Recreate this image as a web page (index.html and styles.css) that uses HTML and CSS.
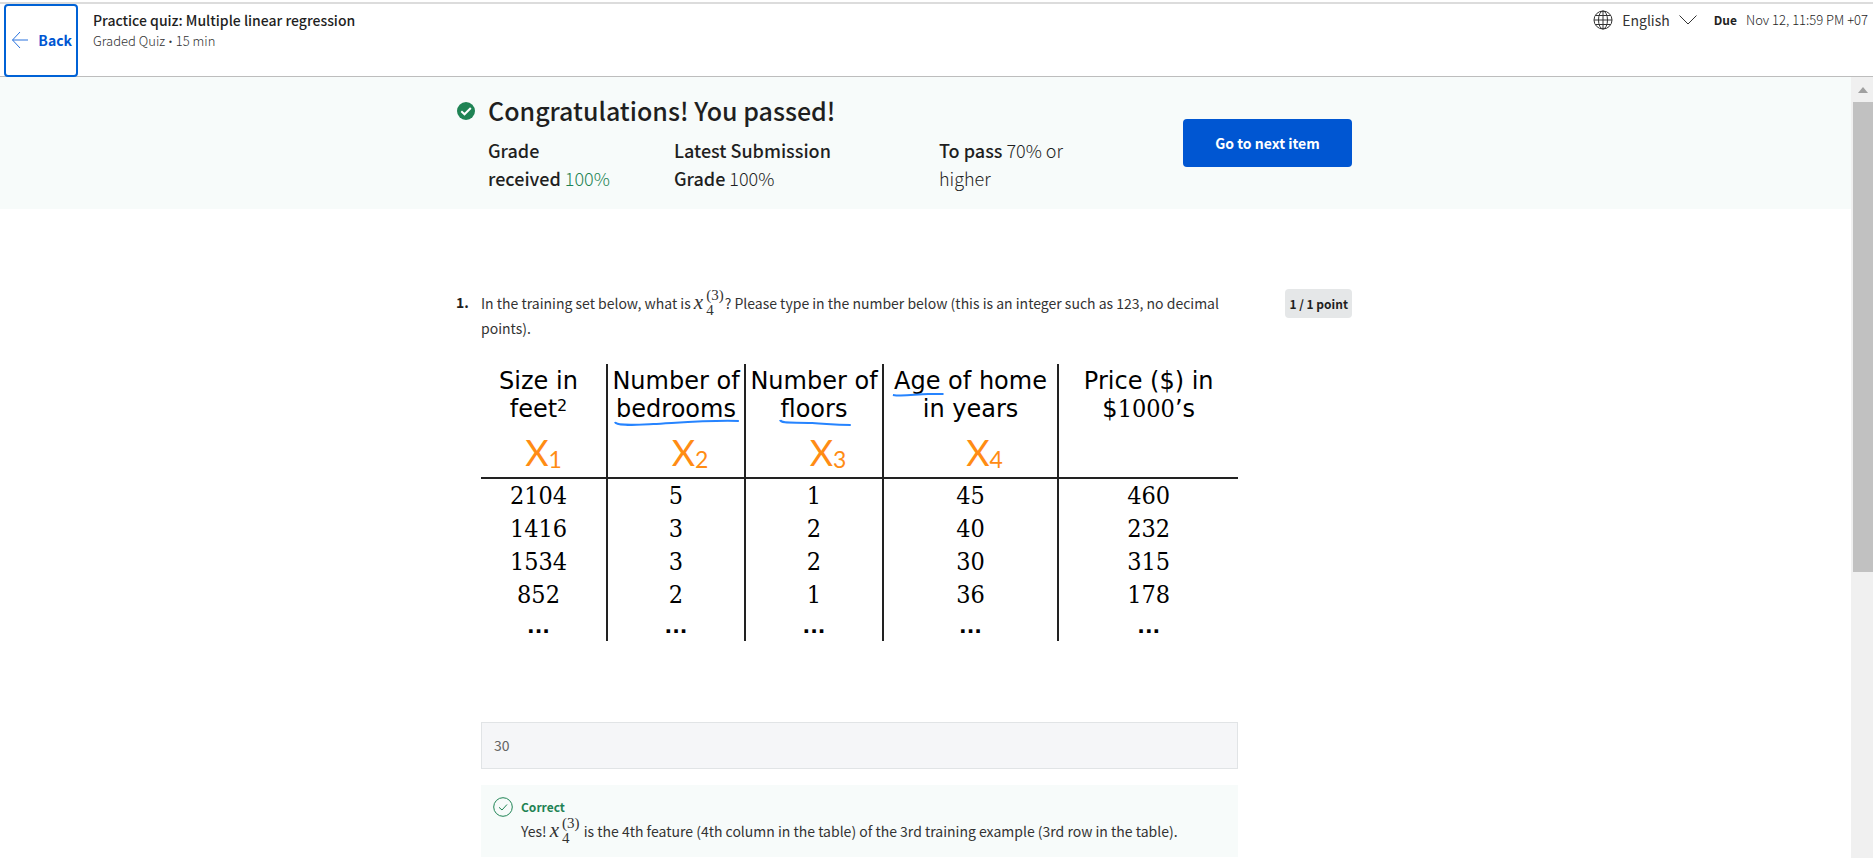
FILE: index.html
```html
<!DOCTYPE html>
<html lang="en">
<head>
<meta charset="utf-8">
<title>Practice quiz: Multiple linear regression</title>
<link rel="stylesheet" href="styles.css">
</head>
<body>
<header class="topbar">
  <button class="back" type="button">
    <svg class="back-icon" viewBox="0 0 18 18" aria-hidden="true"><path d="M17 9H1.5M9 1L1.500 9L9 17"/></svg>
    <span>Back</span>
  </button>
  <div class="quiz-info">
    <h1 class="quiz-title">Practice quiz: Multiple linear regression</h1>
    <p class="quiz-meta">Graded Quiz <span class="bullet">•</span> 15 min</p>
  </div>
  <div class="topbar-right">
    <button class="language" type="button">
      <svg class="globe" viewBox="0 0 20 20" aria-hidden="true"><circle cx="10" cy="10" r="9"/><ellipse cx="10" cy="10" rx="4.500" ry="9"/><path d="M10 1V19M1 10H19M2.500 5.500H17.500M2.500 14.500H17.500"/></svg>
      <span>English</span>
      <svg class="chevron" viewBox="0 0 18 10" aria-hidden="true"><path d="M0.500 0.500L9 9L17.500 0.500"/></svg>
    </button>
    <p class="due"><strong>Due</strong><span>Nov 12, 11:59 PM +07</span></p>
  </div>
</header>
<div class="viewport">
  <main class="page">
    <section class="banner">
      <div class="container banner-inner">
        <svg class="passed-icon" viewBox="0 0 18 18" aria-hidden="true"><circle cx="9" cy="9" r="9" fill="#1f8354"/><path d="M4.300 9.300L7.500 12.300L13.800 6" fill="none" stroke="#fff" stroke-width="2"/></svg>
        <div class="result">
          <h2 class="result-title">Congratulations! You passed!</h2>
          <div class="grades">
            <p><strong>Grade received</strong> <span class="green">100%</span></p>
            <p><strong>Latest Submission Grade</strong> 100%</p>
            <p><strong>To pass</strong> 70% or higher</p>
          </div>
        </div>
        <button class="next" type="button">Go to next item</button>
      </div>
    </section>
    <section class="container question">
      <span class="number">1.</span>
      <div class="question-body">
        <label class="prompt" for="answer">In the training set below, what is <span class="math"><i>x</i><span class="scripts"><span>(3)</span><span>4</span></span></span>? Please type in the number below (this is an integer such as 123, no decimal points).</label>
        <table class="data">
          <colgroup><col class="c1"><col class="c2"><col class="c3"><col class="c4"><col class="c5"></colgroup>
          <thead>
            <tr class="names">
              <th scope="col">Size in<br>feet<sup>2</sup></th>
              <th scope="col">Number of<br><span class="mark">bedrooms<svg viewBox="0 0 128 8" preserveAspectRatio="none" aria-hidden="true"><path d="M1 3C2 7 18 6 40 5S95 1 127 2"/></svg></span></th>
              <th scope="col">Number of<br><span class="mark">floors<svg viewBox="0 0 66 8" preserveAspectRatio="none" aria-hidden="true"><path d="M1 1C2 5 14 3 30 4S50 6 65 6"/></svg></span></th>
              <th scope="col"><span class="mark">Age<svg viewBox="0 0 58 8" preserveAspectRatio="none" aria-hidden="true"><path d="M1 4C12 6 27 3 40 3L57 3"/></svg></span> of home<br>in years</th>
              <th scope="col">Price ($) in<br>$<span class="serif">1000</span>’s</th>
            </tr>
            <tr class="symbols">
              <td>X<sub>1</sub></td><td class="shifted">X<sub>2</sub></td><td class="shifted">X<sub>3</sub></td><td class="shifted">X<sub>4</sub></td><td></td>
            </tr>
          </thead>
          <tbody>
            <tr><td>2104</td><td>5</td><td>1</td><td>45</td><td>460</td></tr>
            <tr><td>1416</td><td>3</td><td>2</td><td>40</td><td>232</td></tr>
            <tr><td>1534</td><td>3</td><td>2</td><td>30</td><td>315</td></tr>
            <tr><td>852</td><td>2</td><td>1</td><td>36</td><td>178</td></tr>
            <tr class="more"><td>...</td><td>...</td><td>...</td><td>...</td><td>...</td></tr>
          </tbody>
        </table>
        <input class="answer" id="answer" type="text" value="30" readonly>
        <div class="feedback">
          <svg class="correct-icon" viewBox="0 0 20 20" aria-hidden="true"><circle cx="10" cy="10" r="9.300"/><path d="M6 10.300L9 13L14 7.500"/></svg>
          <div>
            <p class="verdict">Correct</p>
            <p class="explain">Yes! <span class="math"><i>x</i><span class="scripts"><span>(3)</span><span>4</span></span></span> is the 4th feature (4th column in the table) of the 3rd training example (3rd row in the table).</p>
          </div>
        </div>
      </div>
      <span class="points">1 / 1 point</span>
    </section>
  </main>
  <div class="scrollbar" aria-hidden="true">
    <svg class="scroll-up" viewBox="0 0 10 6"><path d="M0 6L5 0L10 6Z" fill="#a0a0a0"/></svg>
    <div class="thumb"></div>
  </div>
</div>
</body>
</html>
```
FILE: styles.css
```css
* { box-sizing: border-box; }
body {
  margin: 0;
  padding-top: 2px;
  height: 100vh;
  display: flex;
  flex-direction: column;
  overflow: hidden;
  background: #fff;
  color: #1f1f1f;
  font-family: "Noto Sans CJK SC", "Noto Sans", sans-serif;
  font-size: 14px;
  line-height: 20px;
}
h1, h2, p { margin: 0; }
button { font: inherit; color: inherit; background: none; border: 0; padding: 0; }
svg { display: block; flex: none; }

.topbar {
  display: flex;
  flex: none;
  align-items: flex-start;
  border-top: 2px solid #dcdcdc;
  border-bottom: 1px solid #bdbdbd;
  padding: 0 5px 0 4px;
}
.back {
  display: flex;
  align-items: center;
  justify-content: space-between;
  width: 74px;
  height: 73px;
  margin-bottom: -1px;
  padding: 0 4px 2px 5px;
  border: 2px solid #0062d6;
  border-radius: 4px;
  background: #fff;
  color: #0056d2;
  font-weight: 700;
}
.back-icon { width: 18px; height: 18px; fill: none; stroke: #2a73dd; }
.quiz-info { padding: 5px 0 0 15px; }
.quiz-title { font-size: 14px; font-weight: 500; line-height: 22px; }
.quiz-meta { font-size: 13px; font-weight: 300; color: #333; }
.bullet { font-family: "Noto Sans", sans-serif; }
.topbar-right { display: flex; margin-left: auto; gap: 17px; padding-top: 6px; }
.language { display: flex; align-items: center; gap: 9px; color: #333; }
.globe { width: 20px; height: 20px; fill: none; stroke: #333; }
.chevron { width: 18px; height: 10px; fill: none; stroke: #333; }
.due { display: flex; gap: 9px; font-size: 13px; line-height: 19px; font-weight: 300; color: #1f1f1f; }
.due strong { font-size: 12px; font-weight: 700; }

.viewport { display: flex; flex: 1; min-height: 0; }
.page { flex: 1; min-width: 0; overflow: hidden; }
.container { max-width: 939px; margin: 0 auto; padding-right: 43px; }
.banner { background: #f7fbfa; }
.banner-inner { display: flex; padding-top: 15px; padding-bottom: 17px; }
.passed-icon { width: 18px; height: 18px; margin: 10px 0 0 1px; }
.result { flex: 1; padding-left: 13px; }
.result-title { font-size: 25px; font-weight: 500; line-height: 36px; }
.grades { display: grid; grid-template-columns: 186px 265px 130px; padding-top: 8px; font-size: 18px; line-height: 28px; font-weight: 300; }
.grades p { padding-right: 64px; }
.grades p:last-child { padding-right: 0; }
.grades strong { font-weight: 500; }
.green { color: #1f8354; }
.next { width: 169px; height: 48px; margin-top: 27px; border-radius: 4px; background: #0056d2; color: #fff; font-weight: 700; }

.question { display: flex; padding-top: 80px; }
.number { width: 25px; padding-top: 3px; font-weight: 700; }
.question-body { flex: 1; min-width: 0; }
.prompt { display: block; line-height: 25px; padding-top: 2px; color: #333; }
.points { margin-left: 47px; align-self: flex-start; padding: 5px 4px 4px; border-radius: 4px; background: #e5e7e8; font-size: 12px; font-weight: 700; }

.math { font-family: "Liberation Serif", serif; font-size: 21px; line-height: 1; white-space: nowrap; }
.scripts { display: inline-flex; flex-direction: column; margin: -8px 0; padding: 0 1px 0 3px; vertical-align: 9px; font-size: 15px; line-height: 15px; }

.data { width: 100%; margin-top: 23px; table-layout: fixed; border-collapse: collapse; color: #000; text-align: center; }
.c1 { width: 126px; }
.c2, .c3 { width: 138px; }
.c4 { width: 175px; }
.data th, .data td { padding: 0; border-right: 2px solid #222; font-weight: 400; }
.data th:first-child, .data td:first-child { padding-right: 10px; }
.data th:last-child, .data td:last-child { border-right: 0; }
.data th { padding-top: 3px; font: 24px/28px "DejaVu Sans", sans-serif; white-space: nowrap; }
.data sup { font-size: 16px; line-height: 1; vertical-align: 6px; }
.data td, .serif { font-family: "DejaVu Serif Condensed", "DejaVu Serif", serif; font-stretch: condensed; font-size: 25px; }
.data td { line-height: 33px; }
.symbols { border-bottom: 2px solid #222; }
.data .symbols td { padding: 4px 0 0; font: 36px/50px Lato, sans-serif; color: #ff8c14; }
.symbols sub { font-size: 23px; line-height: 1; vertical-align: -2px; }
.data .symbols .shifted { padding-left: 28px; }
.data .more td { font: bold 20px/30px "DejaVu Sans", sans-serif; }
.mark { position: relative; }
.mark svg { position: absolute; left: -2px; bottom: -4px; width: calc(100% + 6px); height: 8px; fill: none; stroke: #2684ff; stroke-width: 2; }

.answer { display: block; width: 100%; height: 47px; margin-top: 81px; padding: 0 13px 2px 12px; border: 1px solid #e1e4e6; border-radius: 0; background: #f5f6f8; color: #636363; font: inherit; }
.feedback { display: flex; gap: 8px; margin-top: 16px; padding: 12px; background: #f7fbfa; }
.correct-icon { width: 20px; height: 20px; fill: none; stroke: #1f8354; }
.verdict { color: #1f8354; font-size: 12px; font-weight: 700; }
.explain { line-height: 28px; color: #333; }

.scrollbar { flex: none; width: 22px; padding: 10px 0 0 2px; background: #f0f0f0; }
.scroll-up { width: 10px; height: 6px; margin: 0 auto 9px 5px; }
.thumb { height: 61%; background: #c1c1c1; }
```
